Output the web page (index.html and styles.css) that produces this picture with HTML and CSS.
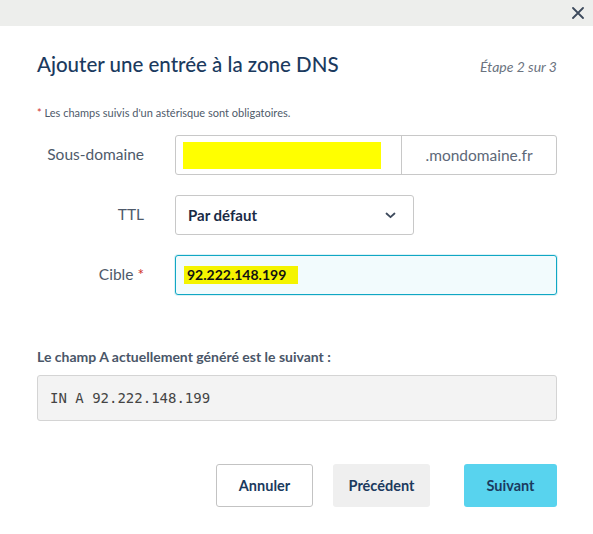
FILE: index.html
```html
<!DOCTYPE html>
<html lang="fr">
<head>
<meta charset="utf-8">
<link rel="stylesheet" href="styles.css">
</head>
<body>
<div class="topbar">
  <button class="close" aria-label="Fermer">
    <svg width="12" height="12" viewBox="0 0 12 12"><path d="M1 1L11 11M11 1L1 11" stroke="#3d4a5c" stroke-width="1.8" stroke-linecap="round"/></svg>
  </button>
</div>
<div class="content">
  <div class="header">
    <h1 class="title">Ajouter une entrée à la zone DNS</h1>
    <span class="step">Étape 2 sur 3</span>
  </div>
  <p class="note"><span class="req">*</span> Les champs suivis d'un astérisque sont obligatoires.</p>
  <div class="form">
    <label class="label">Sous-domaine</label>
    <div class="group">
      <div class="field"><span class="redact"></span></div>
      <div class="addon">.mondomaine.fr</div>
    </div>
    <label class="label">TTL</label>
    <div class="select">
      <span>Par défaut</span>
      <svg width="11" height="7" viewBox="0 0 11 7"><path d="M1.5 1.5L5.5 5.2L9.5 1.5" fill="none" stroke="#3d4a5c" stroke-width="1.8" stroke-linecap="round" stroke-linejoin="round"/></svg>
    </div>
    <label class="label">Cible <span class="req">*</span></label>
    <div class="field focus"><span class="hl">92.222.148.199</span></div>
  </div>
  <h2 class="sub">Le champ A actuellement généré est le suivant :</h2>
  <div class="code">IN A 92.222.148.199</div>
  <div class="actions">
    <button class="btn outline">Annuler</button>
    <button class="btn gray">Précédent</button>
    <button class="btn primary">Suivant</button>
  </div>
</div>
</body>
</html>
```

FILE: styles.css
```css
* { box-sizing: border-box; }
body {
  margin: 0;
  font-family: Lato, "Noto Sans", sans-serif;
  background: #fff;
  color: #1d3557;
}
.topbar {
  height: 26px;
  background: #edeeec;
  display: flex;
  justify-content: flex-end;
  align-items: center;
  padding-right: 8px;
}
.close {
  border: 0;
  background: none;
  padding: 0;
  width: 14px;
  height: 14px;
  display: flex;
  align-items: center;
  justify-content: center;
}
.content {
  padding: 0 36px 0 37px;
}
.header {
  display: flex;
  justify-content: space-between;
  align-items: baseline;
  margin-top: 26px;
}
.title {
  margin: 0;
  font-size: 20.5px;
  line-height: 24px;
  font-weight: 500;
  color: #1b3a5e;
}
.step {
  font-size: 14px;
  font-style: italic;
  color: #6b7380;
}
.note {
  margin: 30px 0 0;
  font-size: 11px;
  line-height: 14px;
  color: #4e5a6a;
}
.req { color: #d0312d; }
.form {
  margin-top: 15px;
  display: grid;
  grid-template-columns: 107px 382px;
  column-gap: 31px;
  row-gap: 20px;
  align-items: center;
}
.label {
  text-align: right;
  font-size: 15.5px;
  color: #4e5a6a;
  padding-bottom: 2px;
}
.group {
  display: flex;
  height: 40px;
  border: 1px solid #c8c8c8;
  border-radius: 3px;
}
.group .field {
  flex: 1;
  border: 0;
  border-right: 1px solid #c8c8c8;
  border-radius: 0;
  height: auto;
}
.field {
  height: 40px;
  border: 1px solid #c8c8c8;
  border-radius: 3px;
  padding: 6px 7px;
  display: flex;
  align-items: center;
}
.redact {
  display: block;
  width: 198px;
  height: 27px;
  background: #ffff00;
}
.addon {
  width: 154px;
  display: flex;
  align-items: center;
  justify-content: center;
  font-size: 15.5px;
  color: #5d6878;
}
.select {
  width: 239px;
  height: 40px;
  border: 1px solid #c8c8c8;
  border-radius: 3px;
  display: flex;
  align-items: center;
  justify-content: space-between;
  padding: 0 17px 0 12px;
  font-size: 15px;
  font-weight: 700;
  color: #1a2b45;
}
.focus {
  border-color: #10a7c4;
  background: #f2fbfd;
  box-shadow: 0 0 0 1px rgba(16,167,196,0.15);
  padding-left: 8px;
}
.hl {
  background: #f4f400;
  font-size: 14px;
  font-weight: 700;
  color: #111;
  padding: 1px 12px 1px 3px;
  line-height: 16px;
}
.sub {
  margin: 53px 0 0;
  font-size: 14px;
  line-height: 18px;
  font-weight: 700;
  color: #4a5668;
}
.code {
  margin-top: 9px;
  height: 46px;
  background: #f3f3f3;
  border: 1px solid #d4d4d4;
  border-radius: 3px;
  display: flex;
  align-items: center;
  padding-left: 12px;
  font-family: "DejaVu Sans Mono", monospace;
  font-size: 14px;
  color: #444;
}
.actions {
  display: flex;
  justify-content: flex-end;
  margin-top: 43px;
}
.btn {
  height: 43px;
  border-radius: 3px;
  font-family: inherit;
  font-size: 14.5px;
  font-weight: 700;
  color: #1b3a5e;
  border: 1px solid transparent;
}
.outline {
  width: 97px;
  background: #fff;
  border-color: #c3c3c3;
}
.gray {
  width: 97px;
  margin-left: 20px;
  background: #efefef;
}
.primary {
  width: 93px;
  margin-left: 34px;
  background: #58d3ee;
}
```
